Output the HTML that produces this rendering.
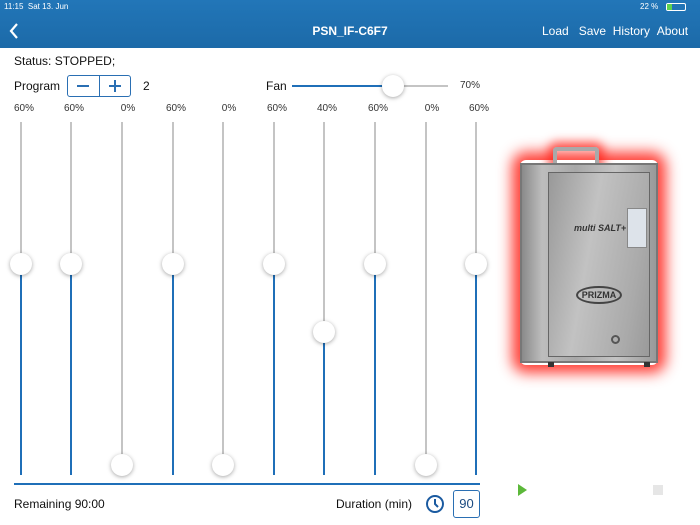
<!DOCTYPE html>
<html><head><style>
*{margin:0;padding:0;box-sizing:border-box}
body{width:700px;height:525px;background:#fff;font-family:"Liberation Sans",sans-serif;position:relative;overflow:hidden;color:#111}
.a{position:absolute}
.hdr{left:0;top:0;width:700px;height:48px;background:linear-gradient(#2276b8,#1c6aa8);color:#fff}
.tr{width:2px;background:#c4c4c4}
.bl{width:2px;background:#1f6fb8}
.th{width:22px;height:22px;border-radius:50%;background:#fff;box-shadow:0 1px 4px rgba(0,0,0,.35)}
.pl{font-size:10px;color:#333;width:40px;text-align:center;top:103px}
</style></head><body>
<div class="a hdr">
 <div class="a" style="left:4px;top:2px;font-size:8px">11:15 &nbsp;Sat 13. Jun</div>
 <div class="a" style="left:640px;top:2px;font-size:8px">22 %</div>
 <div class="a" style="left:666px;top:3px;width:20px;height:8px;border:1px solid #fff;border-radius:2px"><div style="width:5px;height:100%;background:#5fd34f"></div></div>
 <svg class="a" style="left:8px;top:22px" width="12" height="18"><path d="M9 2 L3 9 L9 16" stroke="#fff" stroke-width="2.2" fill="none"/></svg>
 <div class="a" style="left:0;width:700px;text-align:center;top:24px;font-size:12px;font-weight:bold">PSN_IF-C6F7</div>
 <div class="a" style="left:542px;top:24px;font-size:12px">Load &nbsp;&nbsp;Save &nbsp;History &nbsp;About</div>
</div>
<div class="a" style="left:14px;top:54px;font-size:12px">Status: STOPPED;</div>
<div class="a" style="left:14px;top:79px;font-size:12px">Program</div>
<div class="a" style="left:67px;top:75px;width:64px;height:22px;border:1px solid #2a6fb3;border-radius:3px"><div class="a" style="left:31px;top:0;width:1px;height:20px;background:#2a6fb3"></div>
<div class="a" style="left:9px;top:9px;width:12px;height:1.5px;background:#2a6fb3"></div>
<div class="a" style="left:41px;top:9px;width:12px;height:1.5px;background:#2a6fb3"></div><div class="a" style="left:46.3px;top:4px;width:1.5px;height:12px;background:#2a6fb3"></div></div>
<div class="a" style="left:143px;top:79px;font-size:12px">2</div>
<div class="a" style="left:266px;top:79px;font-size:12px">Fan</div>
<div class="a" style="left:292px;top:85px;width:100px;height:2px;background:#1f6fb8"></div>
<div class="a" style="left:392px;top:85px;width:56px;height:2px;background:#c4c4c4"></div>
<div class="a th" style="left:382px;top:75px"></div>
<div class="a" style="left:460px;top:80px;font-size:10px;color:#333">70%</div>

<div class="a pl" style="left:4px">60%</div><div class="a tr" style="left:20px;top:122px;height:142px"></div><div class="a bl" style="left:20px;top:264px;height:211px"></div><div class="a th" style="left:10px;top:253px"></div>
<div class="a pl" style="left:54px">60%</div><div class="a tr" style="left:70px;top:122px;height:142px"></div><div class="a bl" style="left:70px;top:264px;height:211px"></div><div class="a th" style="left:60px;top:253px"></div>
<div class="a pl" style="left:108px">0%</div><div class="a tr" style="left:121px;top:122px;height:343px"></div><div class="a bl" style="left:121px;top:465px;height:10px"></div><div class="a th" style="left:111px;top:454px"></div>
<div class="a pl" style="left:156px">60%</div><div class="a tr" style="left:172px;top:122px;height:142px"></div><div class="a bl" style="left:172px;top:264px;height:211px"></div><div class="a th" style="left:162px;top:253px"></div>
<div class="a pl" style="left:209px">0%</div><div class="a tr" style="left:222px;top:122px;height:343px"></div><div class="a bl" style="left:222px;top:465px;height:10px"></div><div class="a th" style="left:212px;top:454px"></div>
<div class="a pl" style="left:257px">60%</div><div class="a tr" style="left:273px;top:122px;height:142px"></div><div class="a bl" style="left:273px;top:264px;height:211px"></div><div class="a th" style="left:263px;top:253px"></div>
<div class="a pl" style="left:307px">40%</div><div class="a tr" style="left:323px;top:122px;height:210px"></div><div class="a bl" style="left:323px;top:332px;height:143px"></div><div class="a th" style="left:313px;top:321px"></div>
<div class="a pl" style="left:358px">60%</div><div class="a tr" style="left:374px;top:122px;height:142px"></div><div class="a bl" style="left:374px;top:264px;height:211px"></div><div class="a th" style="left:364px;top:253px"></div>
<div class="a pl" style="left:412px">0%</div><div class="a tr" style="left:425px;top:122px;height:343px"></div><div class="a bl" style="left:425px;top:465px;height:10px"></div><div class="a th" style="left:415px;top:454px"></div>
<div class="a pl" style="left:459px">60%</div><div class="a tr" style="left:475px;top:122px;height:142px"></div><div class="a bl" style="left:475px;top:264px;height:211px"></div><div class="a th" style="left:465px;top:253px"></div>

<div class="a" style="left:14px;top:483px;width:466px;height:2px;background:#1f6fb8"></div>
<div class="a" style="left:14px;top:497px;font-size:12px">Remaining 90:00</div>
<div class="a" style="left:336px;top:497px;font-size:12px">Duration (min)</div>
<svg class="a" style="left:425px;top:494px" width="20" height="20"><circle cx="10" cy="10" r="8" stroke="#1a5aa0" stroke-width="2" fill="none"/><path d="M10 5 V10 L13 13" stroke="#1a5aa0" stroke-width="2" fill="none"/></svg>
<div class="a" style="left:453px;top:490px;width:27px;height:28px;border:1px solid #2a6fb3;border-radius:3px;font-size:13px;text-align:center;line-height:26px;color:#1a4a80">90</div>

<div class="a" style="left:520px;top:160px;width:138px;height:205px;box-shadow:0 0 14px 8px rgba(255,30,20,.85);border-radius:6px"></div>
<div class="a" style="left:553px;top:147px;width:46px;height:18px;border:4px solid #a9a9a9;border-bottom:none;border-radius:4px 4px 0 0;box-shadow:0 0 10px 5px rgba(255,30,20,.7)"></div>
<div class="a" style="left:520px;top:163px;width:138px;height:200px;background:linear-gradient(90deg,#8a8a8a,#bdbdbd 15%,#a8a8a8 40%,#c4c4c4 70%,#999);border:2px solid #777"></div>
<div class="a" style="left:548px;top:172px;width:102px;height:185px;border:1px solid #666;background:linear-gradient(100deg,#999,#c2c2c2 40%,#aaa 80%,#9a9a9a)"></div>
<div class="a" style="left:627px;top:208px;width:20px;height:40px;background:#dde3ea;border:1px solid #888"></div>
<div class="a" style="left:574px;top:223px;font-size:9px;font-style:italic;font-weight:bold;color:#333">multi SALT+</div>
<div class="a" style="left:576px;top:286px;width:46px;height:18px;border:2px solid #444;border-radius:50%;font-size:9px;font-weight:bold;text-align:center;line-height:14px;color:#333">PRIZMA</div>
<div class="a" style="left:611px;top:335px;width:9px;height:9px;border:2px solid #555;border-radius:50%"></div>
<div class="a" style="left:548px;top:362px;width:6px;height:5px;background:#333"></div>
<div class="a" style="left:644px;top:362px;width:6px;height:5px;background:#333"></div>

<svg class="a" style="left:518px;top:484px" width="10" height="12"><path d="M0 0 L9 6 L0 12Z" fill="#5cb83a"/></svg>
<div class="a" style="left:653px;top:485px;width:10px;height:10px;background:#e6e6e6"></div>
</body></html>
